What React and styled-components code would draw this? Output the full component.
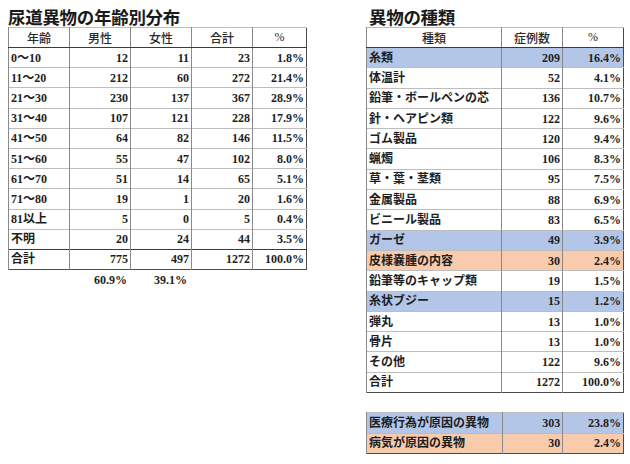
import React from "react"
import styled, { createGlobalStyle } from "styled-components"

const GlobalStyle = createGlobalStyle`
	body {
		margin: 0;
		background: #ffffff;
		font-family: "Liberation Serif", "Noto Sans CJK JP", serif;
		color: #1e1e1e;
	}
`

const BLUE = "#b4c6e7"
const ORANGE = "#f8cbad"

const ageRows = [
	["0～10", 12, 11, 23, "1.8%"],
	["11～20", 212, 60, 272, "21.4%"],
	["21～30", 230, 137, 367, "28.9%"],
	["31～40", 107, 121, 228, "17.9%"],
	["41～50", 64, 82, 146, "11.5%"],
	["51～60", 55, 47, 102, "8.0%"],
	["61～70", 51, 14, 65, "5.1%"],
	["71～80", 19, 1, 20, "1.6%"],
	["81以上", 5, 0, 5, "0.4%"],
	["不明", 20, 24, 44, "3.5%"],
]

const kindRows = [
	["糸類", 209, "16.4%", "blue"],
	["体温計", 52, "4.1%"],
	["鉛筆・ボールペンの芯", 136, "10.7%"],
	["針・ヘアピン類", 122, "9.6%"],
	["ゴム製品", 120, "9.4%"],
	["蝋燭", 106, "8.3%"],
	["草・葉・茎類", 95, "7.5%"],
	["金属製品", 88, "6.9%"],
	["ビニール製品", 83, "6.5%"],
	["ガーゼ", 49, "3.9%", "blue"],
	["皮様嚢腫の内容", 30, "2.4%", "orange"],
	["鉛筆等のキャップ類", 19, "1.5%"],
	["糸状ブジー", 15, "1.2%", "blue"],
	["弾丸", 13, "1.0%"],
	["骨片", 13, "1.0%"],
	["その他", 122, "9.6%"],
]

const causeRows = [
	["医療行為が原因の異物", 303, "23.8%", "blue"],
	["病気が原因の異物", 30, "2.4%", "orange"],
]

const Page = styled.div`
	display: flex;
	align-items: flex-start;
	gap: 59px;
	padding: 7px 0 0 8px;
	width: 630px;
	height: 464px;
	box-sizing: border-box;
`

const Section = styled.section`
	display: flex;
	flex-direction: column;
`

const Title = styled.h2`
	margin: 0;
	padding-left: ${ props => props.$indent || 0 }px;
	font-family: "Noto Sans CJK JP", sans-serif;
	font-size: 17.5px;
	font-weight: 700;
	line-height: 20px;
	height: 20px;
	color: #1a1a1a;
	letter-spacing: -0.3px;
`

const Table = styled.table`
	border-collapse: collapse;
	table-layout: fixed;
	border: 1px solid #4a4a4a;
	margin-top: ${ props => props.$gap || 0 }px;
	font-size: 12px;
	font-weight: 700;
`

const Row = styled.tr`
	height: ${ props => props.$h || 20.3 }px;
	background: ${ props => props.$tone === "blue" ? BLUE : props.$tone === "orange" ? ORANGE : "transparent" };
	border-top: 1px solid ${ props => props.$strong ? "#3a3a3a" : "#bdbdbd" };
`

const HeadCell = styled.th`
	width: ${ props => props.$w }px;
	padding: 0;
	font-weight: 500;
	font-family: "Liberation Serif", "Noto Sans CJK JP", serif;
	text-align: center;
	border-left: 1px solid #8a8a8a;
	border-bottom: 1px solid #3a3a3a;
	color: #2a2a2a;
`

const Cell = styled.td`
	padding: 0 2px;
	text-align: ${ props => props.$left ? "left" : "right" };
	border-left: 1px solid #8a8a8a;
	white-space: nowrap;
	overflow: hidden;
	line-height: 14px;
`

const ShareRow = styled.div`
	display: flex;
	height: 21px;
	align-items: center;
	padding-left: 61px;
	font-size: 12px;
	font-weight: 700;
`

const ShareCell = styled.span`
	width: 60px;
	padding-right: 2px;
	box-sizing: border-box;
	text-align: right;
`

const App = () => (
	<>
		<GlobalStyle/>
		<Page>
			<Section>
				<Title>尿道異物の年齢別分布</Title>
				<Table>
					<thead>
						<Row $h={ 20 }>
							<HeadCell $w={ 60 }>年齢</HeadCell>
							<HeadCell $w={ 60 }>男性</HeadCell>
							<HeadCell $w={ 60 }>女性</HeadCell>
							<HeadCell $w={ 60 }>合計</HeadCell>
							<HeadCell $w={ 53 }>%</HeadCell>
						</Row>
					</thead>
					<tbody>
						{ ageRows.map(([age, m, f, t, p]) => (
							<Row key={ age } $h={ 20.2 }>
								<Cell $left>{ age }</Cell>
								<Cell>{ m }</Cell>
								<Cell>{ f }</Cell>
								<Cell>{ t }</Cell>
								<Cell>{ p }</Cell>
							</Row>
						)) }
						<Row $h={ 20.2 } $strong>
							<Cell $left>合計</Cell>
							<Cell>775</Cell>
							<Cell>497</Cell>
							<Cell>1272</Cell>
							<Cell>100.0%</Cell>
						</Row>
					</tbody>
				</Table>
				<ShareRow>
					<ShareCell>60.9%</ShareCell>
					<ShareCell>39.1%</ShareCell>
				</ShareRow>
			</Section>
			<Section>
				<Title $indent={ 3 }>異物の種類</Title>
				<Table>
					<thead>
						<Row $h={ 20 }>
							<HeadCell $w={ 134 }>種類</HeadCell>
							<HeadCell $w={ 60 }>症例数</HeadCell>
							<HeadCell $w={ 60 }>%</HeadCell>
						</Row>
					</thead>
					<tbody>
						{ kindRows.map(([name, n, p, tone]) => (
							<Row key={ name } $tone={ tone }>
								<Cell $left>{ name }</Cell>
								<Cell>{ n }</Cell>
								<Cell>{ p }</Cell>
							</Row>
						)) }
						<Row>
							<Cell $left>合計</Cell>
							<Cell>1272</Cell>
							<Cell>100.0%</Cell>
						</Row>
					</tbody>
				</Table>
				<Table $gap={ 19 }>
					<colgroup>
						<col style={ { width: 134 } }/>
						<col style={ { width: 60 } }/>
						<col style={ { width: 60 } }/>
					</colgroup>
					<tbody>
						{ causeRows.map(([name, n, p, tone]) => (
							<Row key={ name } $tone={ tone } $h={ 20.5 }>
								<Cell $left>{ name }</Cell>
								<Cell>{ n }</Cell>
								<Cell>{ p }</Cell>
							</Row>
						)) }
					</tbody>
				</Table>
			</Section>
		</Page>
	</>
)

export default App
